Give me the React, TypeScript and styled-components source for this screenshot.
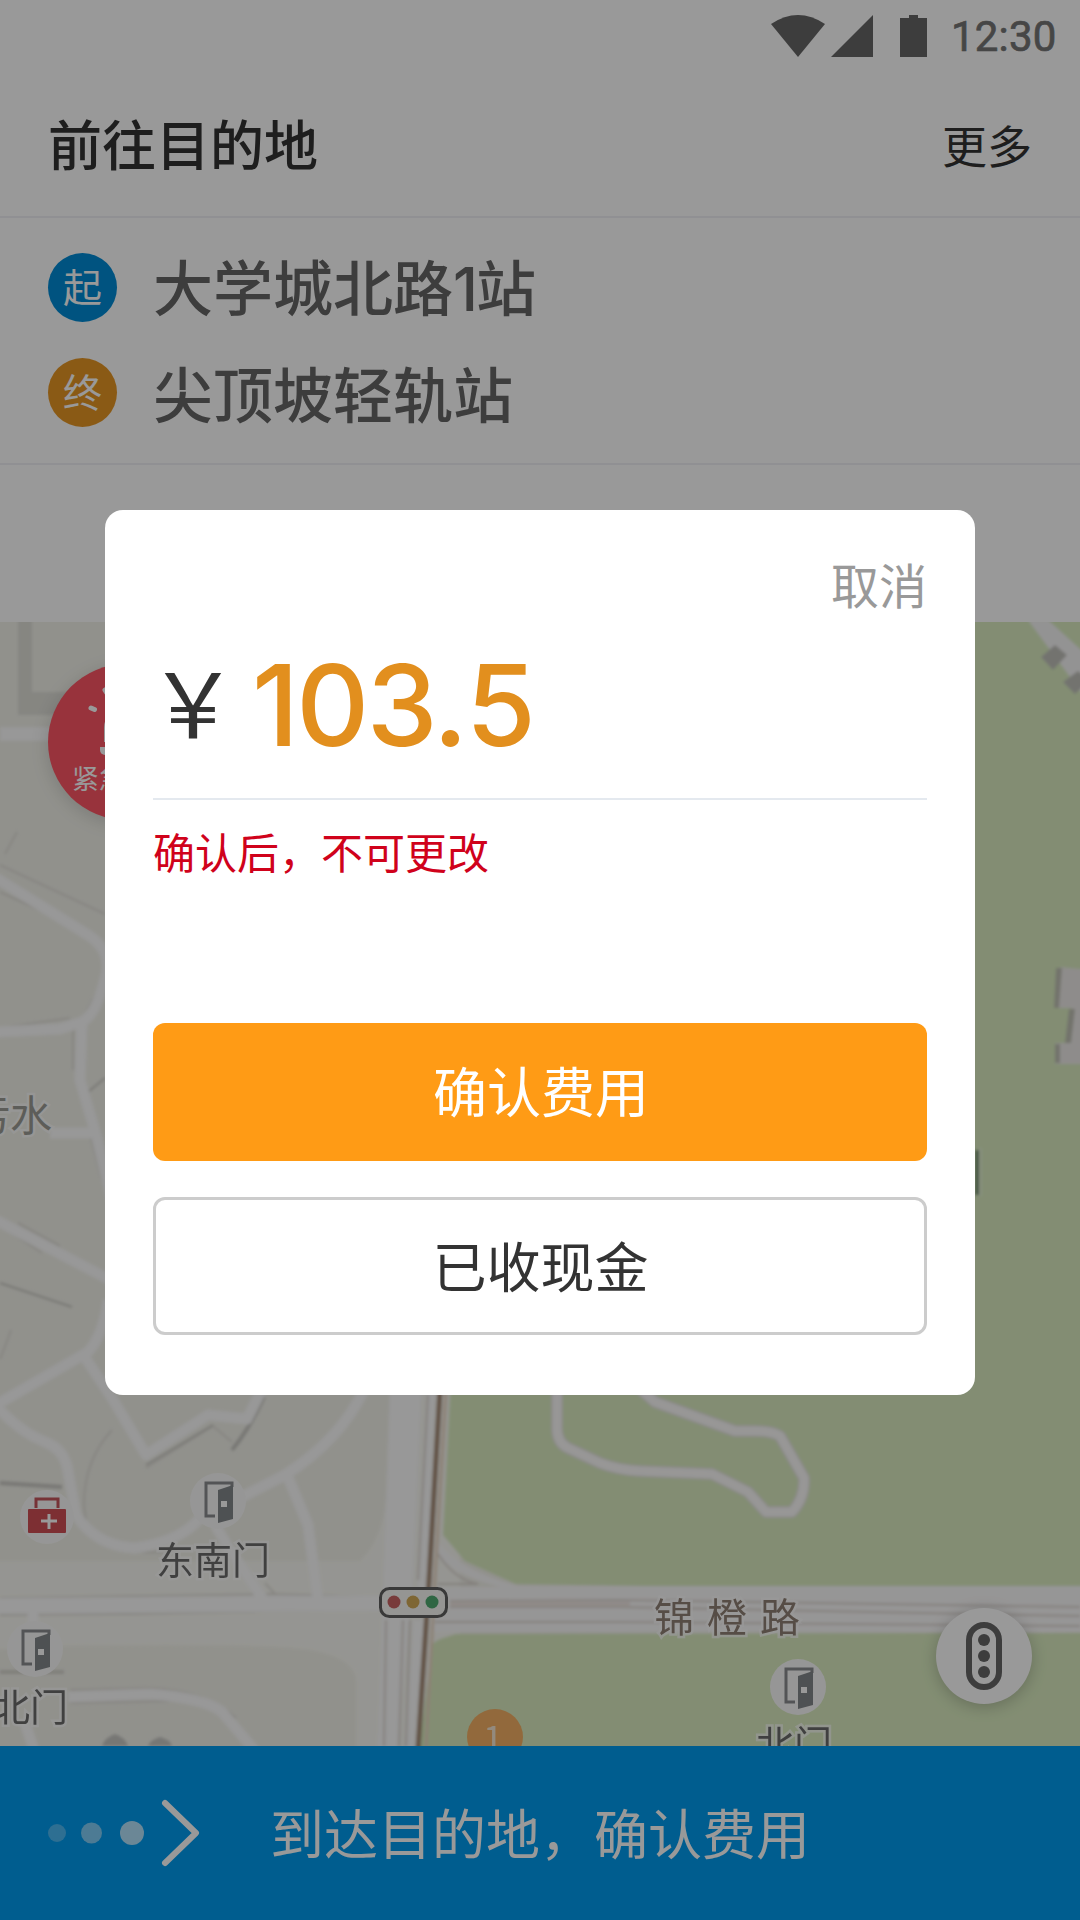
import React from "react";
import styled, { createGlobalStyle } from "styled-components";

const sans = `"Noto Sans CJK SC", "Noto Sans", sans-serif`;

const GlobalStyle = createGlobalStyle`
  * { box-sizing: border-box; }
  body { margin: 0; background: #fff; font-family: ${sans}; }
  button { font-family: inherit; cursor: pointer; }
`;

const Screen = styled.div`
  position: relative;
  display: flex;
  flex-direction: column;
  width: 1080px;
  height: 1920px;
  overflow: hidden;
  background: #fff;
`;

const StatusBar = styled.div`
  display: flex;
  align-items: center;
  justify-content: flex-end;
  height: 72px;
  padding-right: 24px;
`;

const Clock = styled.span`
  width: 105px;
  margin-left: 23px;
  padding-top: 1px;
  font: 400 42px/72px Roboto, sans-serif;
  letter-spacing: 0.2px;
  white-space: nowrap;
  color: #757575;
  -webkit-text-stroke: 0.7px #757575;
`;

const TitleBar = styled.header`
  display: flex;
  align-items: center;
  justify-content: space-between;
  height: 146px;
  padding: 0 48px 2px;
  border-bottom: 2px solid #f0f0f6;
`;

const Title = styled.h1`
  margin: 0;
  font-size: 54px;
  font-weight: 500;
  line-height: 72px;
  color: #333;
`;

const More = styled.span`
  font-size: 45px;
  line-height: 72px;
  color: #333;
  padding-top: 3px;
`;

const RoutePanel = styled.section`
  display: flex;
  flex-direction: column;
  gap: 35px;
  height: 247px;
  padding: 34px 48px 0;
  border-bottom: 2px solid #f0f0f6;
`;

const Stop = styled.div`
  display: flex;
  align-items: center;
  gap: 36px;
  height: 70px;
`;

const Badge = styled.span<{ $color: string }>`
  display: grid;
  place-items: center;
  width: 69px;
  height: 69px;
  padding-bottom: 3px;
  border-radius: 50%;
  background: ${(p) => p.$color};
  color: #fff;
  font-size: 39px;
  line-height: 1;
`;

const StopName = styled.span`
  font-size: 60px;
  font-weight: 500;
  line-height: 70px;
  color: #666;
`;

const StopDigit = styled.span`
  font-family: Inter, sans-serif;
  font-weight: 500;
  font-size: 60px;
  letter-spacing: -2px;
`;

const InfoPanel = styled.div`
  position: relative;
  height: 157px;
  background: #fff;
  box-shadow: 0 6px 8px -3px rgba(0, 0, 0, 0.1);
`;

const MapArea = styled.main`
  position: relative;
  flex: 1;
  overflow: hidden;
`;

const MapCanvas = styled.svg`
  display: block;
`;

const MapLabel = styled.span<{ $x: number; $y: number; $size?: number; $gap?: number; $color?: string; $plain?: boolean }>`
  position: absolute;
  left: ${(p) => p.$x}px;
  top: ${(p) => p.$y}px;
  font-size: ${(p) => p.$size ?? 38}px;
  letter-spacing: ${(p) => p.$gap ?? 0}px;
  line-height: 1;
  white-space: nowrap;
  color: ${(p) => p.$color ?? "#6c6c6c"};
  -webkit-text-stroke: ${(p) => (p.$plain ? "0" : "5px rgba(255, 255, 255, 0.7)")};
  paint-order: stroke fill;
`;

const EmergencyButton = styled.div`
  position: absolute;
  left: 48px;
  top: 42px;
  width: 156px;
  height: 156px;
  border-radius: 50%;
  background: #fd5564;
  box-shadow: 0 4px 18px rgba(0, 0, 0, 0.15);
`;

const EmergencyText = styled.span`
  display: block;
  padding: 100px 0 0 24px;
  font-size: 27px;
  line-height: 27px;
  color: #fff;
`;

const SirenIcon = styled.svg`
  position: absolute;
  left: 0;
  top: 0;
`;

const TrafficButton = styled.div`
  position: absolute;
  left: 936px;
  top: 986px;
  display: grid;
  place-items: center;
  width: 96px;
  height: 96px;
  border-radius: 50%;
  background: #fff;
  box-shadow: 0 3px 16px rgba(0, 0, 0, 0.22);
`;

const ArriveBar = styled.footer`
  display: flex;
  align-items: center;
  height: 174px;
  padding-left: 48px;
  background: #009bee;
`;

const ArriveText = styled.span`
  margin-left: 66px;
  padding-bottom: 3px;
  font-size: 54px;
  line-height: 72px;
  color: #fff;
`;

const Scrim = styled.div`
  position: absolute;
  inset: 0;
  display: flex;
  justify-content: center;
  align-items: flex-start;
  padding-top: 510px;
  background: rgba(0, 0, 0, 0.4);
`;

const Dialog = styled.div`
  display: flex;
  flex-direction: column;
  width: 870px;
  height: 885px;
  padding: 46px 48px 60px;
  border-radius: 18px;
  background: #fff;
`;

const Cancel = styled.button`
  align-self: flex-end;
  height: 54px;
  padding: 0;
  border: 0;
  background: none;
  font-size: 48px;
  line-height: 54px;
  color: #999;
`;

const PriceRow = styled.div`
  display: flex;
  align-items: center;
  height: 190px;
  border-bottom: 2px solid #e4e9ef;
`;

const Currency = styled.span`
  width: 104px;
  margin-left: -5px;
  padding-bottom: 10px;
  font-size: 90px;
  line-height: 100px;
  color: #333;
`;

const Amount = styled.span`
  padding-bottom: 2px;
  font-family: Inter, sans-serif;
  font-size: 113px;
  font-weight: 500;
  line-height: 120px;
  letter-spacing: -2.6px;
  color: #e28f1e;
`;

const Point = styled.span`
  display: inline-block;
  width: 31px;
  text-align: center;
  font-family: Lato, sans-serif;
  font-weight: 700;
  letter-spacing: 0;
`;

const Warning = styled.p`
  margin: 30px 0 0;
  font-size: 42px;
  line-height: 42px;
  color: #d0021b;
`;

const Actions = styled.div`
  display: flex;
  flex-direction: column;
  gap: 36px;
  margin-top: auto;
`;

const ActionButton = styled.button<{ $primary?: boolean }>`
  height: 138px;
  padding: ${(p) => (p.$primary ? "0 0 4px 2px" : "0 0 3px 1px")};
  border-radius: 12px;
  border: ${(p) => (p.$primary ? "0" : "3px solid #ccc")};
  background: ${(p) => (p.$primary ? "#ff9b15" : "#fff")};
  color: ${(p) => (p.$primary ? "#fff" : "#333")};
  font-size: 54px;
  line-height: 72px;
`;

const StatusIcons = () => (
  <svg width="157" height="42" viewBox="771 15 157 42" fill="#666">
    <path d="M771 24 Q798 6 825 24 L798 57Z" />
    <path d="M873 15V57H831Z" />
    <path d="M900 18H909V15H918V18H927V57H900Z" />
  </svg>
);

const Door = ({ x, y }: { x: number; y: number }) => (
  <g transform={`translate(${x} ${y})`}>
    <circle r="28" fill="#fbfbfa" />
    <path d="M-3 15H-12V-18H14V-14" fill="none" stroke="#8a8d90" strokeWidth="3" />
    <path d="M0 -11L15 -16V18L0 22Z" fill="#83878a" />
    <rect x="3" y="0" width="6" height="6" fill="#fff" />
  </g>
);

const CityMap = () => (
  <MapCanvas width="1080" height="1124" viewBox="0 622 1080 1124">
    <defs>
      <filter id="soft"><feGaussianBlur stdDeviation="1.4" /></filter>
      <filter id="slight"><feGaussianBlur stdDeviation="0.5" /></filter>
    </defs>
    <rect y="622" width="1080" height="1124" fill="#f2f2ea" />
    <g filter="url(#soft)">
      <path d="M18 600H32V692H120V715H18Z" fill="#dfdfd8" />
      <path d="M-9 1561H360Q382 1540 386 1500L394 1380H460V1760H356V1680Q354 1658 310 1650Q260 1643 60 1646L-9 1650Z" fill="#f9f9f3" />

      <path d="M451 1380H1100V1593L516 1584L465 1561L443 1535Z" fill="#daecc0" />
      <path d="M500 600H1100V1500H500Z" fill="#daecc0" />
      <path d="M418 1760L432 1645Q434 1640 456 1634L1100 1633V1760Z" fill="#daecc0" />

      <g fill="none" stroke="#e0ded8" strokeWidth="2">
        <path d="M0 865L105 914M0 892L70 924L105 945M5 854L17 832M0 1028L70 1018M73 1020V1070M18 1223L60 1246M10 1232L42 1253M0 1359Q6 1345 11 1330" />
        <path d="M90 1135L102 1180M100 938Q108 960 98 990L84 1016" />
        <path d="M112 1430Q84 1460 84 1505L86 1522M146 1468L213 1426L232 1442M0 1598L270 1594L380 1597M0 1615L130 1614L380 1609" />
        <path d="M70 1690L150 1688Q205 1690 236 1718M70 1703L170 1701M250 1583L257 1594M265 1583L275 1594" />
        <path d="M82 1528Q120 1560 175 1550M299 1500L312 1566" />
      </g>
      <path d="M0 1283L72 1307M88 1092L105 1078M146 1465L213 1425" fill="none" stroke="#c9c8c2" strokeWidth="2" />
      <path d="M0 1483L62 1487M264 1397Q250 1428 232 1450" fill="none" stroke="#c8c7c2" strokeWidth="4" />
      <path d="M0 1672H64" stroke="#d5d4ce" strokeWidth="4" />

      <g fill="none" stroke="#fdfdfd" strokeWidth="11" strokeLinejoin="round">
        <path d="M0 734H54" strokeWidth="14" />
        <path d="M-4 878L88 935Q115 952 104 982Q96 1014 82 1022L60 1029L-4 1032" />
        <path d="M82 1020L80 1080L97 1138L112 1200" />
        <path d="M50 1133H95M-4 1220L112 1281M-4 1405L88 1352Q104 1334 108 1300M84 1356L112 1398L146 1455L208 1415L247 1419L264 1385" />
        <path d="M-4 1406Q20 1432 45 1442Q62 1448 67 1466L76 1515Q96 1546 135 1548Q180 1542 200 1518M230 1503L285 1475Q340 1440 364 1390M287 1475L308 1525L318 1600M215 1525L230 1550L267 1605" />
        <path d="M-4 1606L390 1603" strokeWidth="16" />
        <path d="M33 1610V1660M68 1697L150 1694Q205 1698 222 1712L256 1752M24 1720L34 1750" />
      </g>

      <path d="M390 1380H422L413 1580L396 1760H377Z" fill="#fdfdfd" />
      <path d="M428 1380H436L426 1590H417Z" fill="#fdfdfd" />
      <path d="M438 1541Q456 1569 518 1586H1090V1632L430 1632V1587H500Q458 1577 438 1555Z" fill="#fbfafa" />
      <path d="M413 1620H424L414 1750H406Z" fill="#fdfdfd" />
      <path d="M386 1620L384 1746M403 1620L399 1746M410 1620L406 1746M428 1395L418 1580M438 1584H478Q455 1580 438 1554M435 1622H620L1080 1626M450 1601L620 1600L1080 1607M450 1607L620 1607L1080 1616" fill="none" stroke="#dcd5d0" strokeWidth="2" />
      <path d="M450 1604L630 1604" stroke="#f0e7e3" strokeWidth="5" />
      <path d="M446 1390L435 1580L426 1750" fill="none" stroke="#ead8c4" strokeWidth="3" />
      <path d="M440 1390L429 1580L418 1750" fill="none" stroke="#a38872" strokeWidth="5" />

      <path d="M557 1385V1425Q556 1442 568 1448L600 1463Q618 1470 640 1471L712 1474L748 1492L766 1512H792Q805 1498 804 1478L780 1436Q772 1431 755 1431H735L655 1402L630 1380" fill="none" stroke="#e6e3e0" strokeWidth="12" strokeLinejoin="round" />
      <path d="M557 1385V1425Q556 1442 568 1448L600 1463Q618 1470 640 1471L712 1474L748 1492L766 1512H792Q805 1498 804 1478L780 1436Q772 1431 755 1431H735L655 1402L630 1380" fill="none" stroke="#fdfcfb" strokeWidth="9" strokeLinejoin="round" />

      <path d="M1028 620L1090 704V658L1048 620Z" fill="#f6f5f6" />
      <path d="M1041 657L1055 645L1067 655L1053 670ZM1063 682L1078 671L1090 680L1075 694Z" fill="#c0c0ba" />
      <path d="M1060 967L1090 970V1064H1055V1043H1066L1072 1008H1055Z" fill="#edeae8" />
      <path d="M1056 968H1062L1059 1008H1054ZM1069 1009H1075L1071 1043H1065ZM1055 1044H1060V1063H1055Z" fill="#bfc0b4" />
      <path d="M980 1148V1196" stroke="#e5f1d6" strokeWidth="3" />
      <path d="M977 1150V1195" stroke="#6d8a6a" strokeWidth="4" />
      <path d="M102 1746Q104 1738 115 1734Q126 1738 128 1746ZM148 1746Q150 1740 160 1737Q171 1740 172 1746Z" fill="#c6c6c2" />
    </g>

    <g filter="url(#slight)">
      <circle cx="47" cy="1517" r="27" fill="#fbfbfa" />
      <path d="M36 1508V1499H58V1508" fill="none" stroke="#c5545c" strokeWidth="3" />
      <rect x="28" y="1509" width="38" height="24" rx="1" fill="#d14f57" />
      <path d="M41 1521H57M49 1514V1529" stroke="#fff" strokeWidth="3" />
      <Door x={218} y={1501} />
      <Door x={35} y={1649} />
      <Door x={798} y={1687} />

      <rect x="380.500" y="1588.500" width="66" height="28" rx="9" fill="#f8f8f5" stroke="#606060" strokeWidth="3" />
      <circle cx="394" cy="1602" r="6.500" fill="#c96464" />
      <circle cx="413" cy="1602" r="6.500" fill="#d2aa55" />
      <circle cx="432" cy="1602" r="6.500" fill="#4fab70" />
      <circle cx="495" cy="1737" r="28" fill="#f3b065" />
    </g>
  </MapCanvas>
);

const App = () => (
  <Screen>
    <GlobalStyle />
    <StatusBar>
      <StatusIcons />
      <Clock>12:30</Clock>
    </StatusBar>
    <TitleBar>
      <Title>前往目的地</Title>
      <More>更多</More>
    </TitleBar>
    <RoutePanel>
      <Stop>
        <Badge $color="#008ad5">起</Badge>
        <StopName>大学城北路<StopDigit>1</StopDigit>站</StopName>
      </Stop>
      <Stop>
        <Badge $color="#e79624">终</Badge>
        <StopName>尖顶坡轻轨站</StopName>
      </Stop>
    </RoutePanel>
    <InfoPanel />
    <MapArea>
      <CityMap />
      <MapLabel $x={-32} $y={470} $size={42} $color="#9c9c94">污水</MapLabel>
      <MapLabel $x={156} $y={917} $size={38}>东南门</MapLabel>
      <MapLabel $x={-8} $y={1064} $size={38}>北门</MapLabel>
      <MapLabel $x={756} $y={1101} $size={38}>北门</MapLabel>
      <MapLabel $x={654} $y={973} $size={40} $gap={13} $color="#8f8075">锦橙路</MapLabel>
      <MapLabel $x={483} $y={1096} $size={36} $color="#f5e6d2" $plain>1</MapLabel>
      <EmergencyButton>
        <SirenIcon width="156" height="156" viewBox="48 664 156 156" fill="#fff" stroke="#fff">
          <path d="M91 708L94.500 709.500M105 690L109 696" strokeWidth="5" strokeLinecap="round" fill="none" />
          <path d="M104 742V728A22 22 0 0 1 148 728V742Z" stroke="none" />
          <path d="M100 747H152V750A5 5 0 0 1 147 755H105A5 5 0 0 1 100 750Z" stroke="none" />
        </SirenIcon>
        <EmergencyText>紧急</EmergencyText>
      </EmergencyButton>
      <TrafficButton>
        <svg width="36" height="68" viewBox="0 0 36 68" fill="#666">
          <rect x="3" y="3" width="30" height="62" rx="15" fill="none" stroke="#666" strokeWidth="6" />
          <circle cx="18" cy="18" r="6" />
          <circle cx="18" cy="34" r="6" />
          <circle cx="18" cy="50" r="6" />
        </svg>
      </TrafficButton>
    </MapArea>
    <ArriveBar>
      <svg width="156" height="72" viewBox="48 1797 156 72" fill="#fff">
        <circle cx="57" cy="1833" r="9" opacity="0.3" />
        <circle cx="91.500" cy="1833" r="10.500" opacity="0.5" />
        <circle cx="132" cy="1833" r="12" opacity="0.7" />
        <path d="M165 1803L196 1833L165 1863" fill="none" stroke="#fff" strokeWidth="6" strokeLinecap="round" strokeLinejoin="round" />
      </svg>
      <ArriveText>到达目的地，确认费用</ArriveText>
    </ArriveBar>
    <Scrim>
      <Dialog>
        <Cancel>取消</Cancel>
        <PriceRow>
          <Currency>￥</Currency>
          <Amount>103<Point>.</Point>5</Amount>
        </PriceRow>
        <Warning>确认后，不可更改</Warning>
        <Actions>
          <ActionButton $primary>确认费用</ActionButton>
          <ActionButton>已收现金</ActionButton>
        </Actions>
      </Dialog>
    </Scrim>
  </Screen>
);

export default App;
